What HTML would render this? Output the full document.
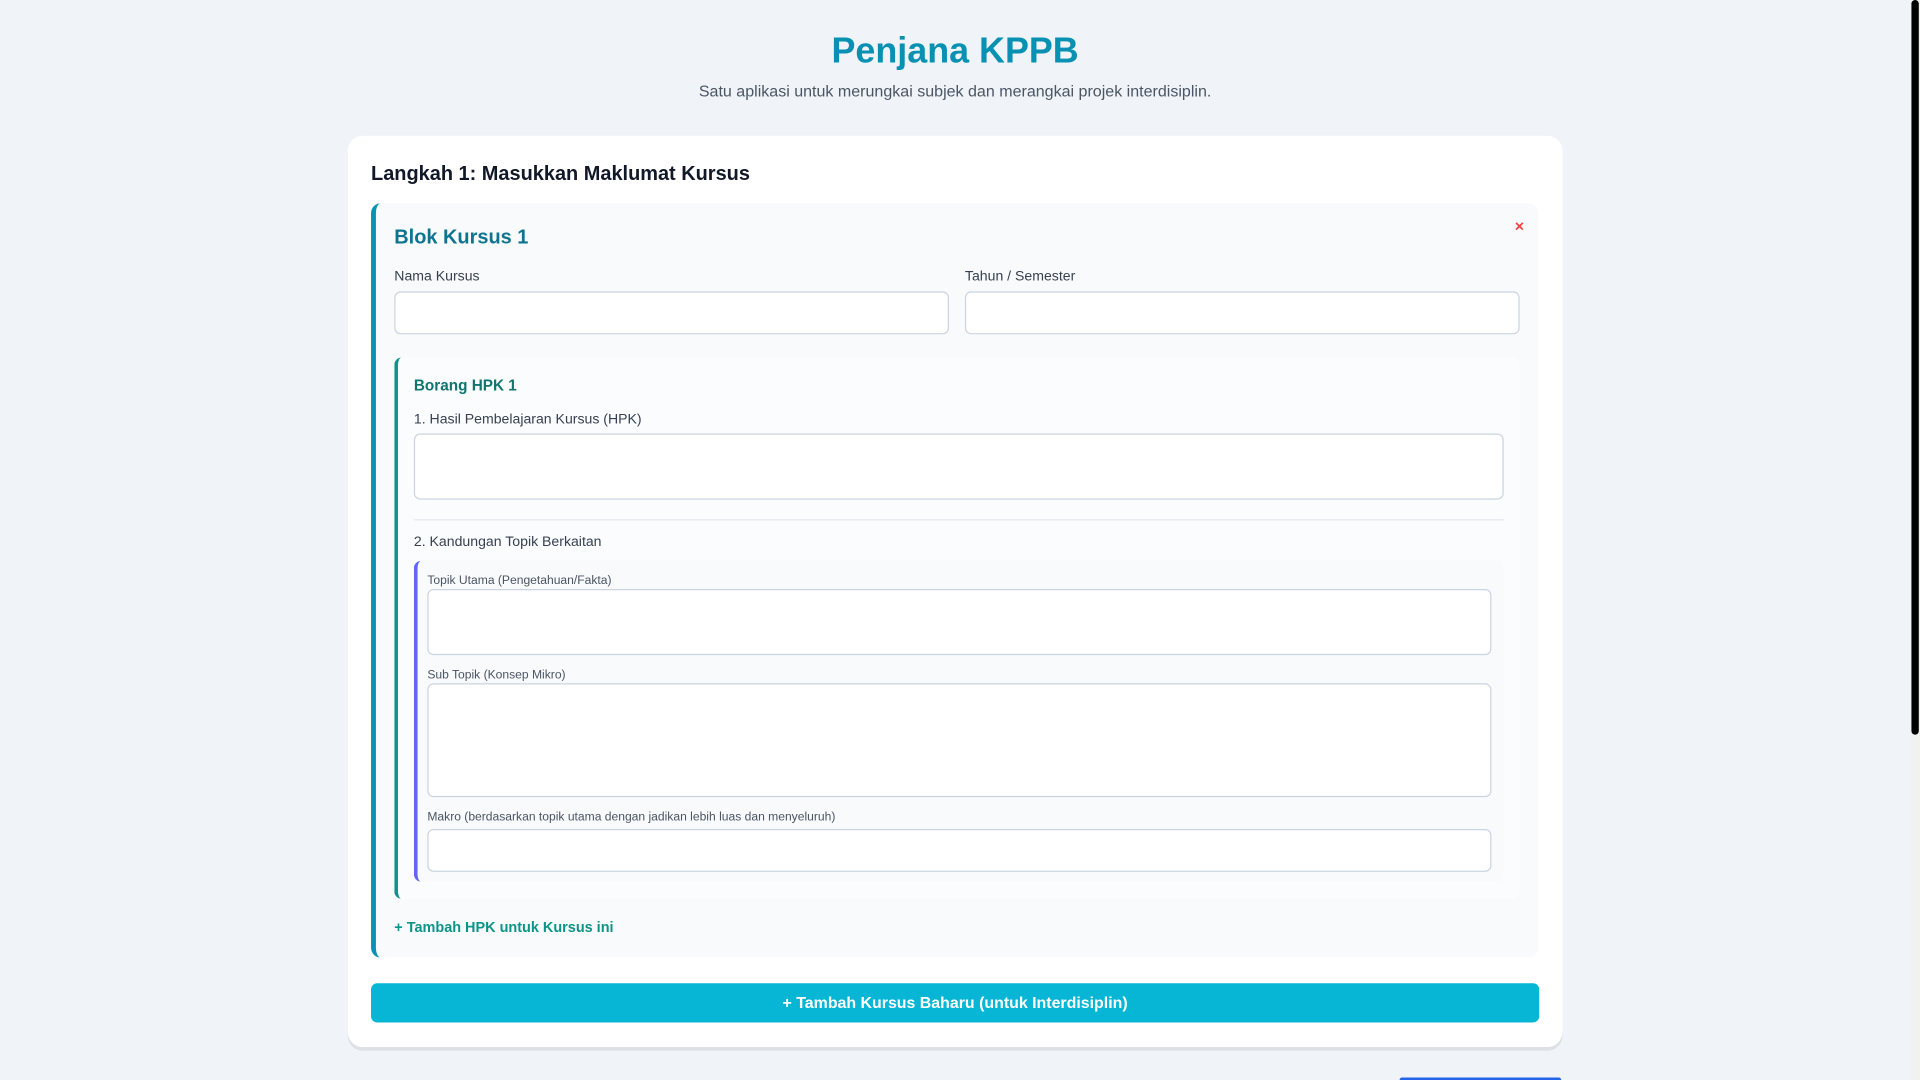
<!DOCTYPE html>
<html><head><meta charset="utf-8"><style>
html,body{margin:0;padding:0;width:1920px;height:1080px;overflow:hidden;background:#f0f4f8;font-family:"Liberation Sans",sans-serif;}
#w{position:absolute;left:0;top:0;width:1568px;height:882px;transform:scale(1.2245);transform-origin:0 0;}
.a{position:absolute;box-sizing:border-box;}
.t{position:absolute;white-space:nowrap;}
.in{position:absolute;box-sizing:border-box;background:#fff;border:1px solid #cbd5e1;border-radius:5px;}
.lab{position:absolute;font-size:11.5px;color:#374151;white-space:nowrap;}
.sl{position:absolute;font-size:9.9px;color:#4b5563;white-space:nowrap;}
</style></head><body><div id="w">
<div class="t" style="left:0;width:1560px;text-align:center;top:25px;font-size:29.3px;font-weight:bold;color:#0891b2;">Penjana KPPB</div>
<div class="t" style="left:0;width:1560px;text-align:center;top:67px;font-size:13.1px;color:#4b5563;">Satu aplikasi untuk merungkai subjek dan merangkai projek interdisiplin.</div>
<div class="a" style="left:284px;top:111px;width:992px;height:744px;background:#fff;border-radius:12px;box-shadow:0 3px 0 #dde1e6;"></div>
<div class="t" style="left:303px;top:133px;font-size:16.3px;font-weight:bold;color:#111827;">Langkah 1: Masukkan Maklumat Kursus</div>
<div class="a" style="left:303px;top:166px;width:953px;height:616px;background:#f8fafc;border-left:4px solid #0891b2;border-radius:8px;"></div>
<div class="t" style="left:322px;top:185px;font-size:16.3px;font-weight:bold;color:#0e7490;">Blok Kursus 1</div>
<div class="t" style="left:1237px;top:177px;font-size:13px;font-weight:bold;color:#ef4444;">×</div>
<div class="lab" style="left:322px;top:220px;">Nama Kursus</div>
<div class="lab" style="left:788px;top:220px;">Tahun / Semester</div>
<div class="in" style="left:322px;top:238px;width:453px;height:35px;"></div>
<div class="in" style="left:788px;top:238px;width:453px;height:35px;"></div>
<div class="a" style="left:322px;top:292px;width:919px;height:442px;background:#fbfcfd;border-left:3px solid #0d9488;border-radius:6px;"></div>
<div class="t" style="left:338px;top:308px;font-size:12.5px;font-weight:bold;color:#0f766e;">Borang HPK 1</div>
<div class="lab" style="left:338px;top:337px;">1. Hasil Pembelajaran Kursus (HPK)</div>
<div class="in" style="left:338px;top:354px;width:890px;height:54px;"></div>
<div class="a" style="left:338px;top:424px;width:890px;height:1px;background:#e2e8f0;"></div>
<div class="lab" style="left:338px;top:437px;">2. Kandungan Topik Berkaitan</div>
<div class="a" style="left:338px;top:458px;width:890px;height:262px;background:#f8fafc;border-left:3px solid #6366f1;border-radius:6px;"></div>
<div class="sl" style="left:349px;top:469px;">Topik Utama (Pengetahuan/Fakta)</div>
<div class="in" style="left:349px;top:481px;width:869px;height:54px;"></div>
<div class="sl" style="left:349px;top:546px;">Sub Topik (Konsep Mikro)</div>
<div class="in" style="left:349px;top:558px;width:869px;height:93px;"></div>
<div class="sl" style="left:349px;top:662px;">Makro (berdasarkan topik utama dengan jadikan lebih luas dan menyeluruh)</div>
<div class="in" style="left:349px;top:677px;width:869px;height:35px;"></div>
<div class="t" style="left:322px;top:750px;font-size:11.8px;font-weight:bold;color:#0d9488;">+ Tambah HPK untuk Kursus ini</div>
<div class="a" style="left:303px;top:803px;width:954px;height:32px;background:#06b6d4;border-radius:5px;color:#fff;font-size:13px;font-weight:bold;text-align:center;line-height:32px;">+ Tambah Kursus Baharu (untuk Interdisiplin)</div>
<div class="a" style="left:1143px;top:880px;width:132px;height:2px;background:#2563eb;border-radius:3px 3px 0 0;"></div>
<div class="a" style="left:1560px;top:0;width:8px;height:882px;background:#f1f1f1;"></div>
<div class="a" style="left:1561px;top:0;width:6px;height:600px;background:#000;border-radius:3px;"></div>
</div></body></html>
